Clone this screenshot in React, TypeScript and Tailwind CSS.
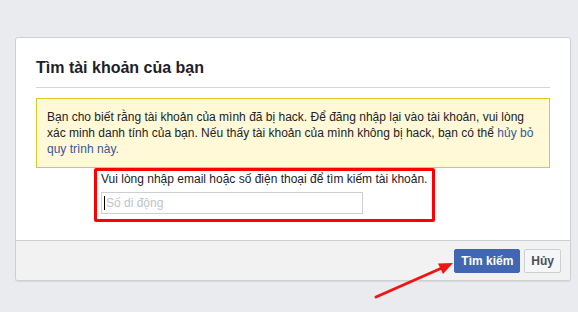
import React from 'react';

const App = () => {
  return (
    <div className="relative min-h-[312px] w-[578px] overflow-hidden bg-[#e9ebee] pt-[37px] font-['Liberation_Sans',Arial,sans-serif]">
      <div className="ml-[15px] w-[556px] rounded-[3px] border border-[#ccd0d5] bg-white shadow-[0_1px_1px_rgba(0,0,0,0.08)]">
        {/* Header */}
        <div className="mx-5 border-b border-[#d3d6db] pb-[9px] pt-5">
          <h2 className="text-base font-bold leading-5 text-[#1d2129]">Tìm tài khoản của bạn</h2>
        </div>

        {/* Warning */}
        <div className="mx-5 mt-[10px] border border-[#e2c822] bg-[#fff9d7] p-[10px] text-xs leading-4 text-[#1d2129]">
          Bạn cho biết rằng tài khoản của mình đã bị hack. Để đăng nhập lại vào tài khoản, vui lòng xác minh danh tính của bạn. Nếu thấy tài khoản của mình không bị hack, bạn có thể{' '}
          <a href="#" className="text-[#365899]">hủy bỏ quy trình này.</a>
        </div>

        {/* Search */}
        <div className="pb-[26px] pl-[85px] pt-[3px]">
          <div className="text-xs leading-4 text-[#1d2129]">Vui lòng nhập email hoặc số điện thoại để tìm kiếm tài khoản.</div>
          <div className="relative mt-[5px] w-[262px]">
            <input
              type="text"
              placeholder="Số di động"
              className="block h-[22px] w-[262px] border border-[#ccd0d5] bg-white px-[4px] text-xs text-[#1d2129] outline-none placeholder:text-[#bec3c9]"
            />
            <span className="absolute left-[3px] top-[4px] h-[14px] w-px bg-black"></span>
          </div>
        </div>

        {/* Footer */}
        <div className="flex justify-end gap-1 rounded-b-[3px] border-t border-[#ccd0d5] bg-[#f2f2f2] pb-[7px] pl-3 pr-[9px] pt-2">
          <button className="h-6 rounded-[2px] border border-[#4267b2] bg-[#4267b2] px-1.5 text-xs font-bold text-white">
            Tìm kiếm
          </button>
          <button className="h-6 rounded-[2px] border border-[#ccd0d5] bg-[#f5f6f7] px-1.5 text-xs font-bold text-[#4b4f56]">
            Hủy
          </button>
        </div>
      </div>

      {/* Annotations */}
      <div className="pointer-events-none absolute left-[94px] top-[168px] h-[54px] w-[341px] rounded-[2px] border-[3px] border-[#ff0000]"></div>
      <svg className="pointer-events-none absolute left-0 top-0" width="578" height="312">
        <line x1="376" y1="297" x2="443" y2="267.5" stroke="#f01414" strokeWidth="3" strokeLinecap="round" />
        <polygon points="453,263 438,263.5 443,274" fill="#f01414" />
      </svg>
    </div>
  );
};

export default App;
